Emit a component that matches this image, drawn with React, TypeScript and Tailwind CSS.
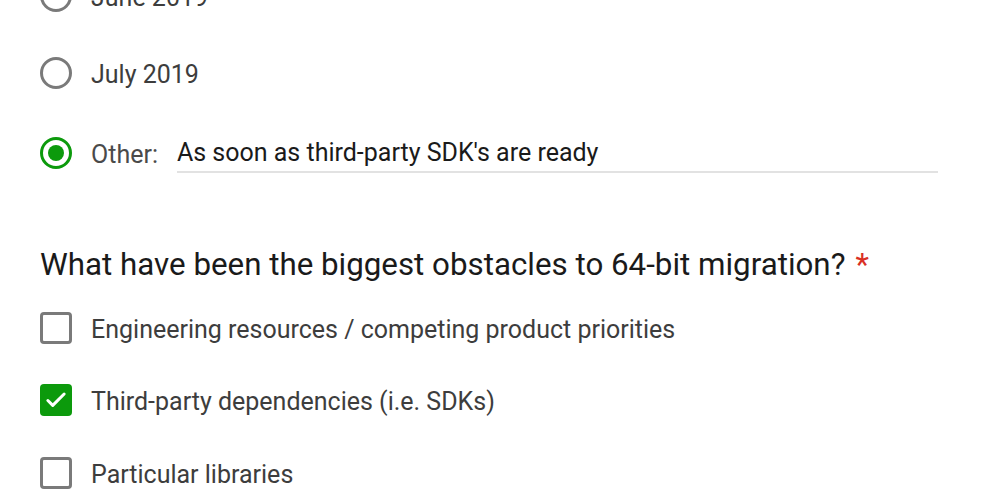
import React from 'react';

function Radio({ checked }: { checked?: boolean }) {
  return (
    <span
      className={
        'flex h-8 w-8 shrink-0 items-center justify-center rounded-full border-[3px] ' +
        (checked ? 'border-[#0c9a0c]' : 'border-[#7a7a7a]')
      }
    >
      {checked && <span className="h-4 w-4 rounded-full bg-[#0c9a0c]" />}
    </span>
  );
}

function Checkbox({ checked }: { checked?: boolean }) {
  if (checked) {
    return (
      <span className="flex h-8 w-8 shrink-0 items-center justify-center rounded-[4px] bg-[#0c9a0c]">
        <svg width="26" height="26" viewBox="0 0 24 24" fill="none">
          <path d="M4.5 12.5l4.5 4.5L19.5 6.5" stroke="#fff" strokeWidth="2.8" strokeLinecap="round" strokeLinejoin="round" />
        </svg>
      </span>
    );
  }
  return <span className="h-8 w-8 shrink-0 rounded-[4px] border-[3px] border-[#7a7a7a]" />;
}

const App: React.FC = () => {
  const obstacles = [
    { label: 'Engineering resources / competing product priorities', checked: false },
    { label: 'Third-party dependencies (i.e. SDKs)', checked: true },
    { label: 'Particular libraries', checked: false },
  ];

  return (
    <div className="h-[500px] w-[1000px] overflow-hidden bg-white font-['Roboto',sans-serif]">
      <div className="-mt-[24px] pl-10 pr-[62px]">
        {/* release month radios */}
        <div className="flex flex-col gap-10">
          <div className="flex h-10 items-center gap-[19px]">
            <Radio />
            <span className="pt-[3px] text-[25px] text-[#3d3d3d]">June 2019</span>
          </div>
          <div className="-mt-[3px] flex h-10 items-center gap-[19px]">
            <Radio />
            <span className="pt-[3px] text-[25px] text-[#3d3d3d]">July 2019</span>
          </div>
          <div className="flex h-10 items-center gap-[19px]">
            <Radio checked />
            <span className="pt-[3px] text-[25px] text-[#4a4a4a]">Other:</span>
            <div className="flex h-10 flex-1 items-center border-b-2 border-[#e2e2e2] pt-[2px] text-[25px] text-[#1a1a1a]">
              As soon as third-party SDK's are ready
            </div>
          </div>
        </div>

        <h2 className="mt-[72px] flex h-10 items-center text-[31.3px] text-[#1a1a1a]">
          What have been the biggest obstacles to 64-bit migration?
          <span className="ml-[10px] text-[#d93025]">*</span>
        </h2>

        <div className="mt-[23px] flex flex-col gap-8">
          {obstacles.map((o, i) => (
            <div key={o.label} className={'flex h-10 items-center gap-[19px] ' + (i === 2 ? 'mt-[1px]' : '')}>
              <Checkbox checked={o.checked} />
              <span className="pt-[3px] text-[25px] text-[#3d3d3d]">{o.label}</span>
            </div>
          ))}
        </div>
      </div>
    </div>
  );
};

export default App;
